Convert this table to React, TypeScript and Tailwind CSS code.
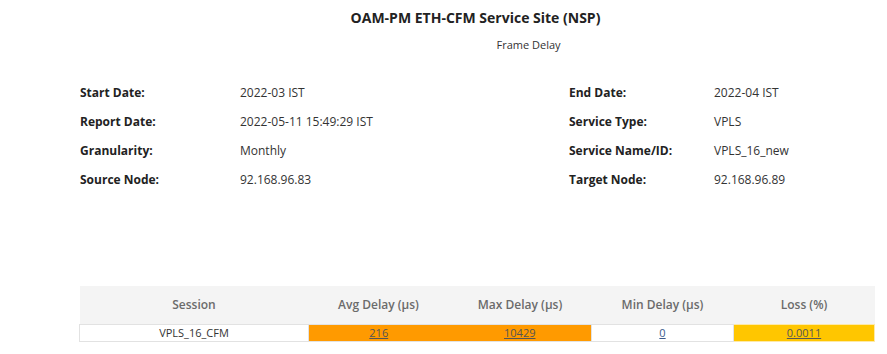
import React from "react"

interface Field {
  label: string
  value: string
}

const leftFields: Field[] = [
  { label: "Start Date:", value: "2022-03 IST" },
  { label: "Report Date:", value: "2022-05-11 15:49:29 IST" },
  { label: "Granularity:", value: "Monthly" },
  { label: "Source Node:", value: "92.168.96.83" },
]

const rightFields: Field[] = [
  { label: "End Date:", value: "2022-04 IST" },
  { label: "Service Type:", value: "VPLS" },
  { label: "Service Name/ID:", value: "VPLS_16_new" },
  { label: "Target Node:", value: "92.168.96.89" },
]

const FieldList: React.FunctionComponent<{ fields: Field[]; labelWidth: string }> = ({
  fields,
  labelWidth,
}) => (
  <div className="flex flex-col gap-[11px]">
    {fields.map((f) => (
      <div key={f.label} className="flex h-[18px] items-center text-[12px]">
        <div className={`${labelWidth} font-bold text-[#222]`}>{f.label}</div>
        <div className="text-[#333]">{f.value}</div>
      </div>
    ))}
  </div>
)

const App = () => {
  return (
    <div
      className="h-[354px] w-[887px] bg-white"
      style={{ fontFamily: "'Open Sans', 'Noto Sans', sans-serif" }}
    >
      <div className="flex flex-col items-center pt-[8px]">
        <div className="ml-[64px] text-[14px] font-bold leading-[20px] text-[#222]">
          OAM-PM ETH-CFM Service Site (NSP)
        </div>
        <div className="ml-[170px] mt-[10px] text-[11px] leading-[14px] text-[#333]">
          Frame Delay
        </div>
      </div>

      <div className="mt-[32px] flex pl-[80px]">
        <div className="w-[489px]">
          <FieldList fields={leftFields} labelWidth="w-[160px]" />
        </div>
        <FieldList fields={rightFields} labelWidth="w-[145px]" />
      </div>

      <div className="ml-[79px] mt-[97px] w-[795px]">
        <table className="w-full table-fixed border-collapse text-[12px]">
          <colgroup>
            <col className="w-[229px]" />
            <col className="w-[140px]" />
            <col className="w-[143px]" />
            <col className="w-[142px]" />
            <col className="w-[141px]" />
          </colgroup>
          <thead>
            <tr className="h-[38px] bg-[#f4f4f4] text-[#6b6b6b]">
              <th className="font-semibold">Session</th>
              <th className="font-semibold">Avg Delay (µs)</th>
              <th className="font-semibold">Max Delay (µs)</th>
              <th className="font-semibold">Min Delay (µs)</th>
              <th className="font-semibold">Loss (%)</th>
            </tr>
          </thead>
          <tbody>
            <tr className="h-[17px] text-[11px] leading-[15px]">
              <td className="border border-[#e2e2e2] text-center text-[#333]">VPLS_16_CFM</td>
              <td className="border-y border-[#e2e2e2] bg-[#ff9a00] text-center">
                <a className="text-[#555] underline">216</a>
              </td>
              <td className="border-y border-[#e2e2e2] bg-[#ff9a00] text-center">
                <a className="text-[#555] underline">10429</a>
              </td>
              <td className="border border-[#e2e2e2] text-center">
                <a className="text-[#3b5b8c] underline">0</a>
              </td>
              <td className="border border-[#fde9a8] bg-[#ffc600] text-center">
                <a className="text-[#555] underline">0.0011</a>
              </td>
            </tr>
          </tbody>
        </table>
      </div>
    </div>
  )
}

export default App
